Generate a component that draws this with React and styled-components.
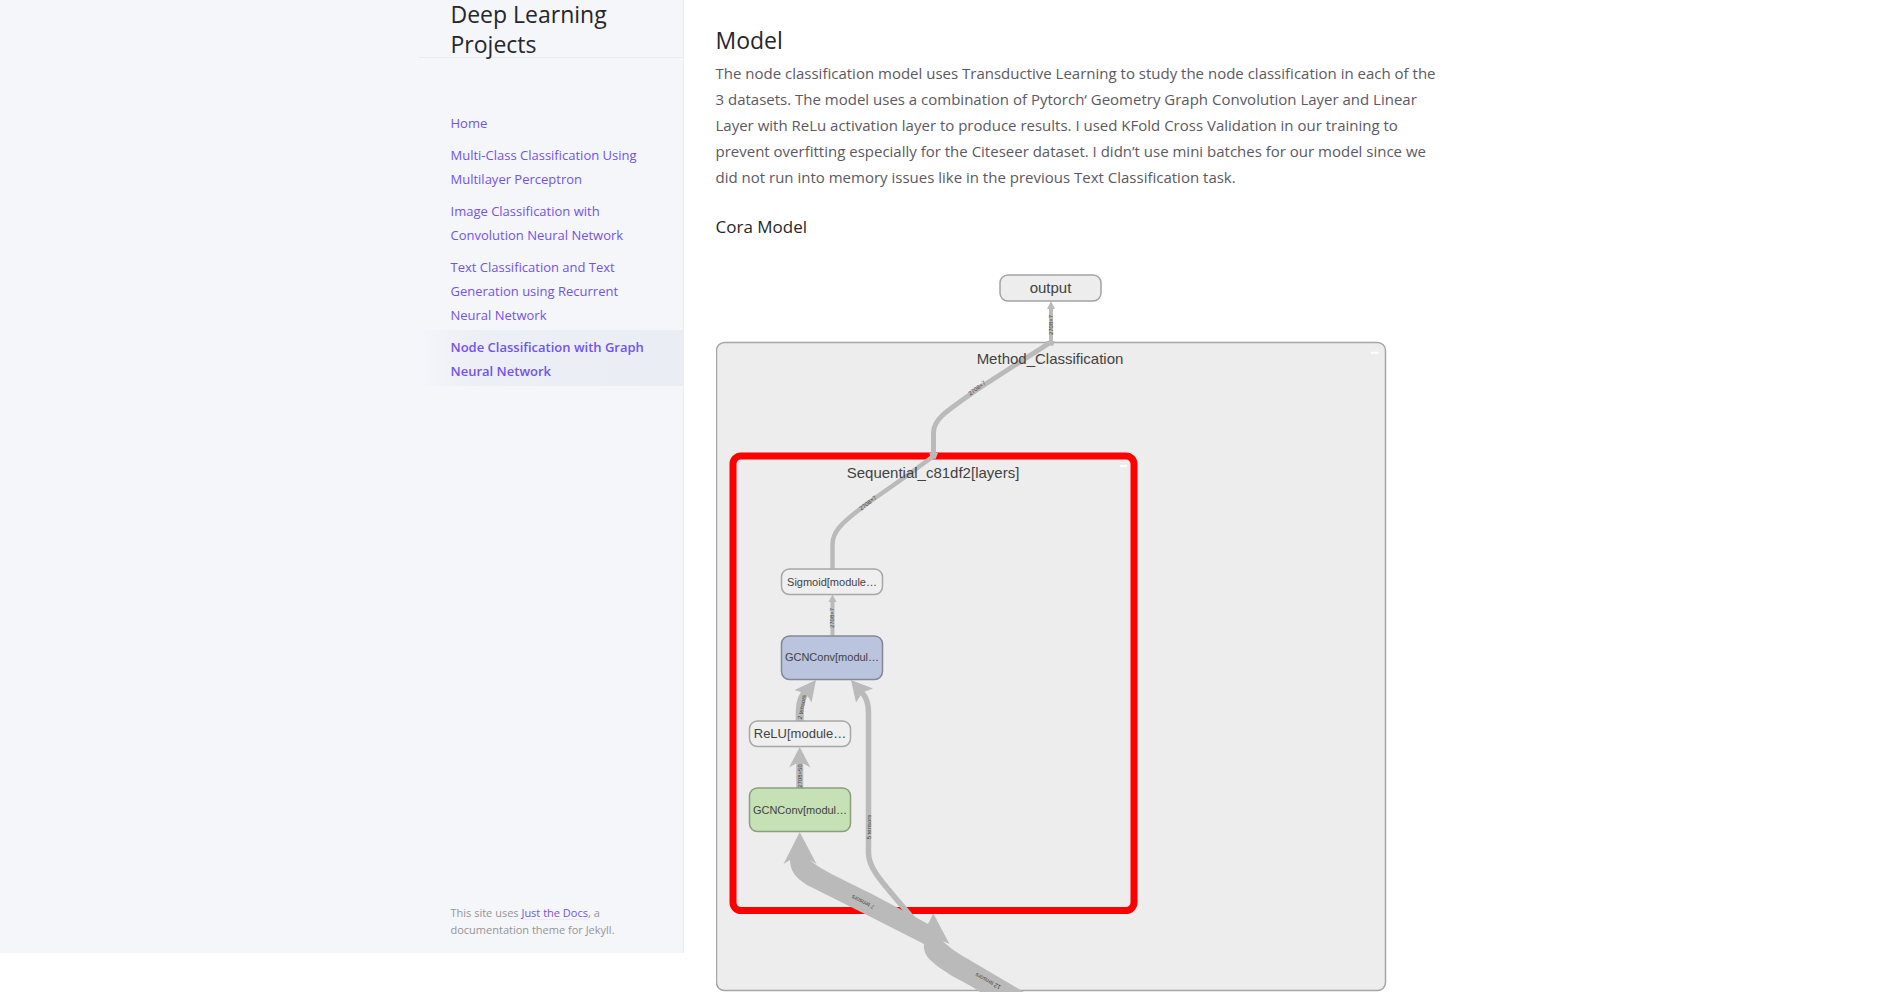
import React from "react";
import styled, { createGlobalStyle } from "styled-components";

const GlobalStyle = createGlobalStyle`
  *, *::before, *::after { box-sizing: border-box; }
  body {
    margin: 0;
    background: #ffffff;
    color: #5c5962;
    font-family: "Segoe UI", "Open Sans", "Noto Sans", sans-serif;
    font-size: 15px;
    line-height: 26px;
  }
`;

const Page = styled.div`
  display: flex;
  align-items: flex-start;
  min-height: 100vh;
`;

const SideBar = styled.aside`
  flex: none;
  position: sticky;
  top: 0;
  display: flex;
  flex-direction: column;
  align-items: flex-end;
  width: calc((100% - 1064px) / 2 + 264px);
  min-width: 264px;
  height: calc(100vh - 39px);
  background: #f5f6fa;
  border-right: 1px solid #eeebee;
`;

const SiteHeader = styled.header`
  flex: none;
  display: flex;
  align-items: center;
  width: 264px;
  height: 58px;
  border-bottom: 1px solid #eeebee;
`;

const SiteTitle = styled.a`
  padding: 0 32px;
  color: #27262b;
  font-size: 23px;
  line-height: 30px;
  text-decoration: none;
`;

const SiteNav = styled.nav`
  flex: 1;
  width: 264px;
  padding-top: 48px;
`;

const NavList = styled.ul`
  margin: 0;
  padding: 0;
  list-style: none;
`;

const NavLink = styled.a`
  display: block;
  padding: 5px 32px 3px;
  color: #7253ed;
  font-size: 13px;
  line-height: 24px;
  font-weight: ${(p) => (p.$active ? 600 : 400)};
  text-decoration: none;
  background: ${(p) =>
    p.$active
      ? "linear-gradient(-90deg, #ebedf5 0%, rgba(235, 237, 245, 0.8) 80%, rgba(235, 237, 245, 0) 100%)"
      : "none"};
`;

const SiteFooter = styled.footer`
  width: 264px;
  padding: 16px 32px 15px;
  color: #959396;
  font-size: 11px;
  line-height: 17px;
`;

const FooterLink = styled.a`
  color: #7253ed;
  text-decoration: underline;
  text-decoration-color: #eeebee;
  text-underline-offset: 2px;
`;

const Main = styled.main`
  flex: 1;
  min-width: 0;
  max-width: 800px;
  padding: 25px 32px 0;
`;

const Heading = styled.h2`
  margin: 0 0 5px;
  color: #27262b;
  font-size: 23px;
  line-height: 30px;
  font-weight: 400;
`;

const SubHeading = styled.h3`
  margin: 24px 0 20px;
  color: #27262b;
  font-size: 17px;
  line-height: 26px;
  font-weight: 400;
`;

const Paragraph = styled.p`
  max-width: 730px;
  margin: 0;
`;

const Diagram = styled.svg`
  display: block;
  width: 100%;
  height: auto;
  font-family: "Liberation Sans", Arial, sans-serif;
`;

const NodeLabel = styled.text`
  fill: #424242;
  font-size: ${(p) => p.$size}px;
  text-anchor: middle;
`;

const EdgeLabel = styled.text`
  fill: #444444;
  font-size: 6px;
  text-anchor: middle;
`;

const Edge = styled.path`
  fill: none;
  stroke: #bababa;
  stroke-width: ${(p) => p.$width};
`;

const EdgeShape = styled.path`
  fill: #bababa;
`;

const links = [
  "Home",
  "Multi-Class Classification Using Multilayer Perceptron",
  "Image Classification with Convolution Neural Network",
  "Text Classification and Text Generation using Recurrent Neural Network",
  "Node Classification with Graph Neural Network",
];

const nodes = [
  { x: 1000, y: 275, h: 26, label: "output", size: 15, base: 293, fill: "#ededed", stroke: "#a3a3a3" },
  { x: 781.5, y: 569, h: 25.5, label: "Sigmoid[module…", size: 11, base: 585.5, fill: "#efefef", stroke: "#a6a6a6" },
  { x: 781.5, y: 636, h: 43.5, label: "GCNConv[modul…", size: 11, base: 661, fill: "#bac4de", stroke: "#818999" },
  { x: 749.5, y: 721, h: 25.5, label: "ReLU[module…", size: 13, base: 738, fill: "#efefef", stroke: "#a6a6a6" },
  { x: 749.5, y: 788, h: 43.5, label: "GCNConv[modul…", size: 11, base: 813.5, fill: "#c5e1b5", stroke: "#8a9e80" },
];

const edgeLabels = [
  { x: 1051, y: 325, angle: -90, text: "2708×7" },
  { x: 977, y: 388, angle: -37, text: "2708×7" },
  { x: 868, y: 503, angle: -38, text: "2708×7" },
  { x: 832, y: 618, angle: -90, text: "2708×7" },
  { x: 802, y: 707, angle: -80, text: "2 tensors" },
  { x: 800, y: 776, angle: -90, text: "2708×50" },
  { x: 869, y: 827, angle: -90, text: "5 tensors" },
  { x: 863, y: 902, angle: 207, text: "7 tensors" },
  { x: 988, y: 981, angle: 209, text: "12 tensors" },
];

function ModelGraph() {
  return (
    <Diagram viewBox="716 260 736 732" role="img" aria-label="Cora model graph">
      <rect x="716.5" y="342.5" width="669" height="648" rx="8" fill="#ededed" stroke="#a6a6a6" strokeWidth="1.5" />
      <rect x="733" y="456" width="401" height="454.5" rx="8" fill="#ededed" stroke="#ff0000" strokeWidth="7" />
      <path d="M1371 352.7h7.5M1120 466h7" stroke="#ffffff" strokeWidth="2" />

      <Edge $width={4} d="M1051 343V308" />
      <EdgeShape d="M1051 301l4 8h-8zM1046 341h9l-2 5-5-1z" />
      <Edge $width={5} d="M1051 342L1012 367L978 389C942 414 933.5 420 933.5 433V456" />
      <EdgeShape d="M929.5 453h8.5l-2.5 6-5-1z" />
      <Edge $width={4.5} d="M935 455L905 477L868 503C838 525 832.5 533 832.5 545V568.5" />
      <Edge $width={4} d="M832.5 635.5V601" />
      <EdgeShape d="M832.5 594.5l4 7.5h-8z" />
      <Edge $width={8} d="M799.7 721V711C799.7 700 803 694 809 689" />
      <EdgeShape d="M816 680L811.5 702.5L806.5 694L794.5 690z" />
      <Edge $width={7} d="M799.7 788V760" />
      <EdgeShape d="M799.7 747L810.5 767.5L799.7 761.5L789 767.5z" />
      <Edge $width={5.5} d="M856 688C865 694 868.5 700 868.5 714V853C868.5 870 885 885 914 920L928 932" />
      <EdgeShape d="M851 680L873 688.5L862.5 692.5L856 702.5z" />
      <EdgeShape d="M799.7 832L816.5 864L810 860C817 867 832 874.5 870 893L917 918L928 924L933.3 913.5L949.5 944L942.7 941C950 948 956 952 967 958.5L1024 992H980C972 986 965 983 953 976.5C930 962 923 956 924 944L863 913L807 885C796 878 790 871 790 860L783.5 864z" />

      {nodes.map((n) => (
        <g key={n.y}>
          <rect x={n.x} y={n.y} width="101" height={n.h} rx="8" fill={n.fill} stroke={n.stroke} strokeWidth="1.5" />
          <NodeLabel $size={n.size} x={n.x + 50.5} y={n.base}>{n.label}</NodeLabel>
        </g>
      ))}
      <NodeLabel $size={15} x="1050" y="364">Method_Classification</NodeLabel>
      <NodeLabel $size={15} x="933" y="477.5">Sequential_c81df2[layers]</NodeLabel>
      {edgeLabels.map((l) => (
        <EdgeLabel key={`${l.x}-${l.y}`} dy="2" transform={`translate(${l.x} ${l.y}) rotate(${l.angle})`}>
          {l.text}
        </EdgeLabel>
      ))}
    </Diagram>
  );
}

export default function App() {
  return (
    <>
      <GlobalStyle />
      <Page>
        <SideBar>
          <SiteHeader>
            <SiteTitle href="#top">Deep Learning Projects</SiteTitle>
          </SiteHeader>
          <SiteNav aria-label="Main">
            <NavList>
              {links.map((label, i) => (
                <li key={label}>
                  <NavLink href={`#page-${i}`} $active={i === links.length - 1}>{label}</NavLink>
                </li>
              ))}
            </NavList>
          </SiteNav>
          <SiteFooter>
            This site uses <FooterLink href="#just-the-docs">Just the Docs</FooterLink>, a documentation theme for Jekyll.
          </SiteFooter>
        </SideBar>
        <Main>
          <Heading>Model</Heading>
          <Paragraph>
            The node classification model uses Transductive Learning to study the node classification in each of
            the 3&nbsp;datasets. The model uses a combination of Pytorch‘ Geometry Graph Convolution Layer and Linear
            Layer with ReLu activation layer to produce results. I used KFold Cross Validation in our training to
            prevent overfitting especially for the Citeseer dataset. I didn’t use mini batches for our model since we
            did not run into memory issues like in the previous Text Classification task.
          </Paragraph>
          <SubHeading>Cora Model</SubHeading>
          <ModelGraph />
        </Main>
      </Page>
    </>
  );
}
